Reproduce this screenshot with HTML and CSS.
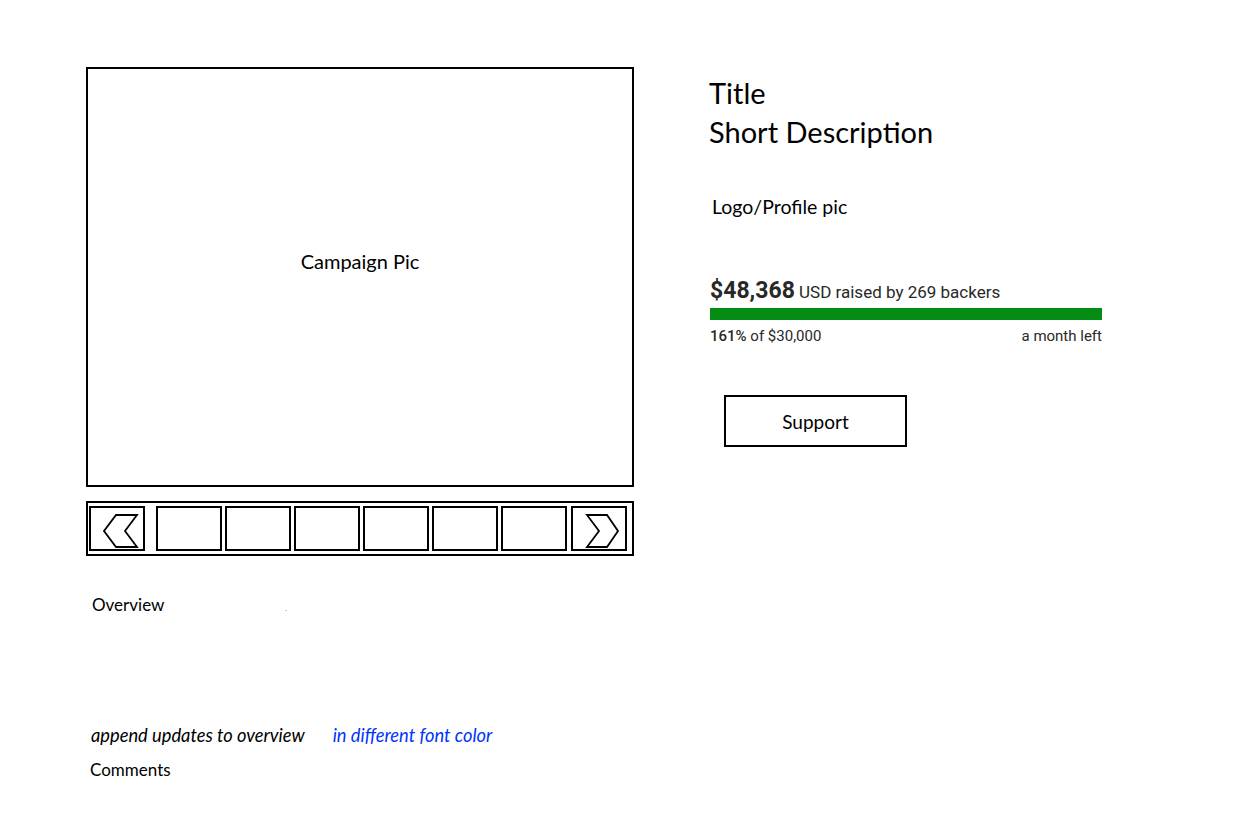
FILE: index.html
```html
<!DOCTYPE html>
<html>
<head>
<meta charset="utf-8">
<link rel="stylesheet" href="styles.css">
</head>
<body>
<div class="page">
  <div class="left">
    <div class="campaign-pic">Campaign Pic</div>
    <div class="strip">
      <div class="arrow">
        <svg viewBox="0 0 52 41" width="52" height="41"><polygon points="25,7 46,7 34,23 46,39 25,39 13,23" fill="none" stroke="#000" stroke-width="1.8" stroke-linejoin="miter"/></svg>
      </div>
      <div class="thumbs">
        <div class="thumb"></div>
        <div class="thumb"></div>
        <div class="thumb"></div>
        <div class="thumb"></div>
        <div class="thumb"></div>
        <div class="thumb"></div>
      </div>
      <div class="arrow">
        <svg viewBox="0 0 52 41" width="52" height="41"><polygon points="14,7 34,7 45,23 34,39 14,39 26,23" fill="none" stroke="#000" stroke-width="1.8" stroke-linejoin="miter"/></svg>
      </div>
    </div>
    <div class="overview">Overview<span class="dot">.</span></div>
    <div class="updates"><em>append updates to overview</em><em class="blue">in different font color</em></div>
    <div class="comments">Comments</div>
  </div>
  <div class="right">
    <div class="title">Title</div>
    <div class="desc">Short Description</div>
    <div class="logo">Logo/Profile pic</div>
    <div class="funding">
      <div class="raised"><span class="amount">$48,368</span> USD raised by 269 backers</div>
      <div class="bar"><div class="fill" style="width:100%"></div></div>
      <div class="meta"><span><b>161%</b> of $30,000</span><span>a month left</span></div>
    </div>
    <button class="support">Support</button>
  </div>
</div>
</body>
</html>
```

FILE: styles.css
```css
* { box-sizing: border-box; }
body {
  margin: 0;
  background: #fff;
  color: #000;
  font-family: Lato, "Open Sans", sans-serif;
}
.page {
  display: flex;
  padding: 67px 0 0 86px;
  gap: 75px;
}
.left {
  width: 548px;
  display: flex;
  flex-direction: column;
}
.campaign-pic {
  height: 420px;
  border: 2px solid #000;
  text-align: center;
  padding-top: 180px;
  font-size: 20px;
}
.strip {
  margin-top: 14px;
  height: 55px;
  border: 2px solid #000;
  display: flex;
  align-items: flex-start;
  padding: 3px 5px 0 1px;
}
.arrow {
  width: 56px;
  height: 45px;
  border: 2px solid #000;
  display: flex;
  align-items: center;
  justify-content: center;
}
.arrow svg { display: block; }
.thumbs {
  display: flex;
  gap: 3px;
  margin: 0 4px 0 11px;
}
.thumb {
  width: 66px;
  height: 45px;
  border: 2px solid #000;
}
.overview {
  margin-top: 39px;
  padding-left: 6px;
  font-size: 17px;
  line-height: 20px;
}
.dot {
  margin-left: 121px;
  font-size: 6px;
}
.updates {
  margin-top: 105px;
  padding-left: 5px;
  font-size: 18.3px;
  line-height: 22px;
}
.updates em { font-style: italic; }
.updates .blue {
  color: #0033ff;
  margin-left: 28px;
}
.comments {
  margin-top: 14px;
  padding-left: 4px;
  font-size: 17px;
  line-height: 20px;
}
.right {
  width: 400px;
  display: flex;
  flex-direction: column;
}
.title, .desc {
  font-size: 29px;
  line-height: 39px;
}
.title { margin-top: 6px; }
.logo {
  margin-top: 44px;
  padding-left: 3px;
  font-size: 19.5px;
  line-height: 24px;
}
.funding {
  margin-top: 59px;
  padding-left: 1px;
  width: 393px;
  font-family: Roboto, "Liberation Sans", sans-serif;
  color: #282828;
}
.raised {
  font-size: 17px;
  line-height: 26px;
}
.amount {
  font-size: 23px;
  font-weight: 700;
}
.bar {
  margin-top: 3px;
  height: 12px;
  background: #e6e6e6;
}
.fill {
  height: 100%;
  background: #048b14;
}
.meta {
  margin-top: 7px;
  display: flex;
  justify-content: space-between;
  font-size: 15px;
  line-height: 18px;
}
.meta b { font-weight: 500; }
.support {
  margin: 50px 0 0 15px;
  width: 183px;
  height: 52px;
  background: #fff;
  border: 2px solid #000;
  font-family: Lato, "Open Sans", sans-serif;
  font-size: 19px;
  color: #000;
  padding: 0;
}
```
